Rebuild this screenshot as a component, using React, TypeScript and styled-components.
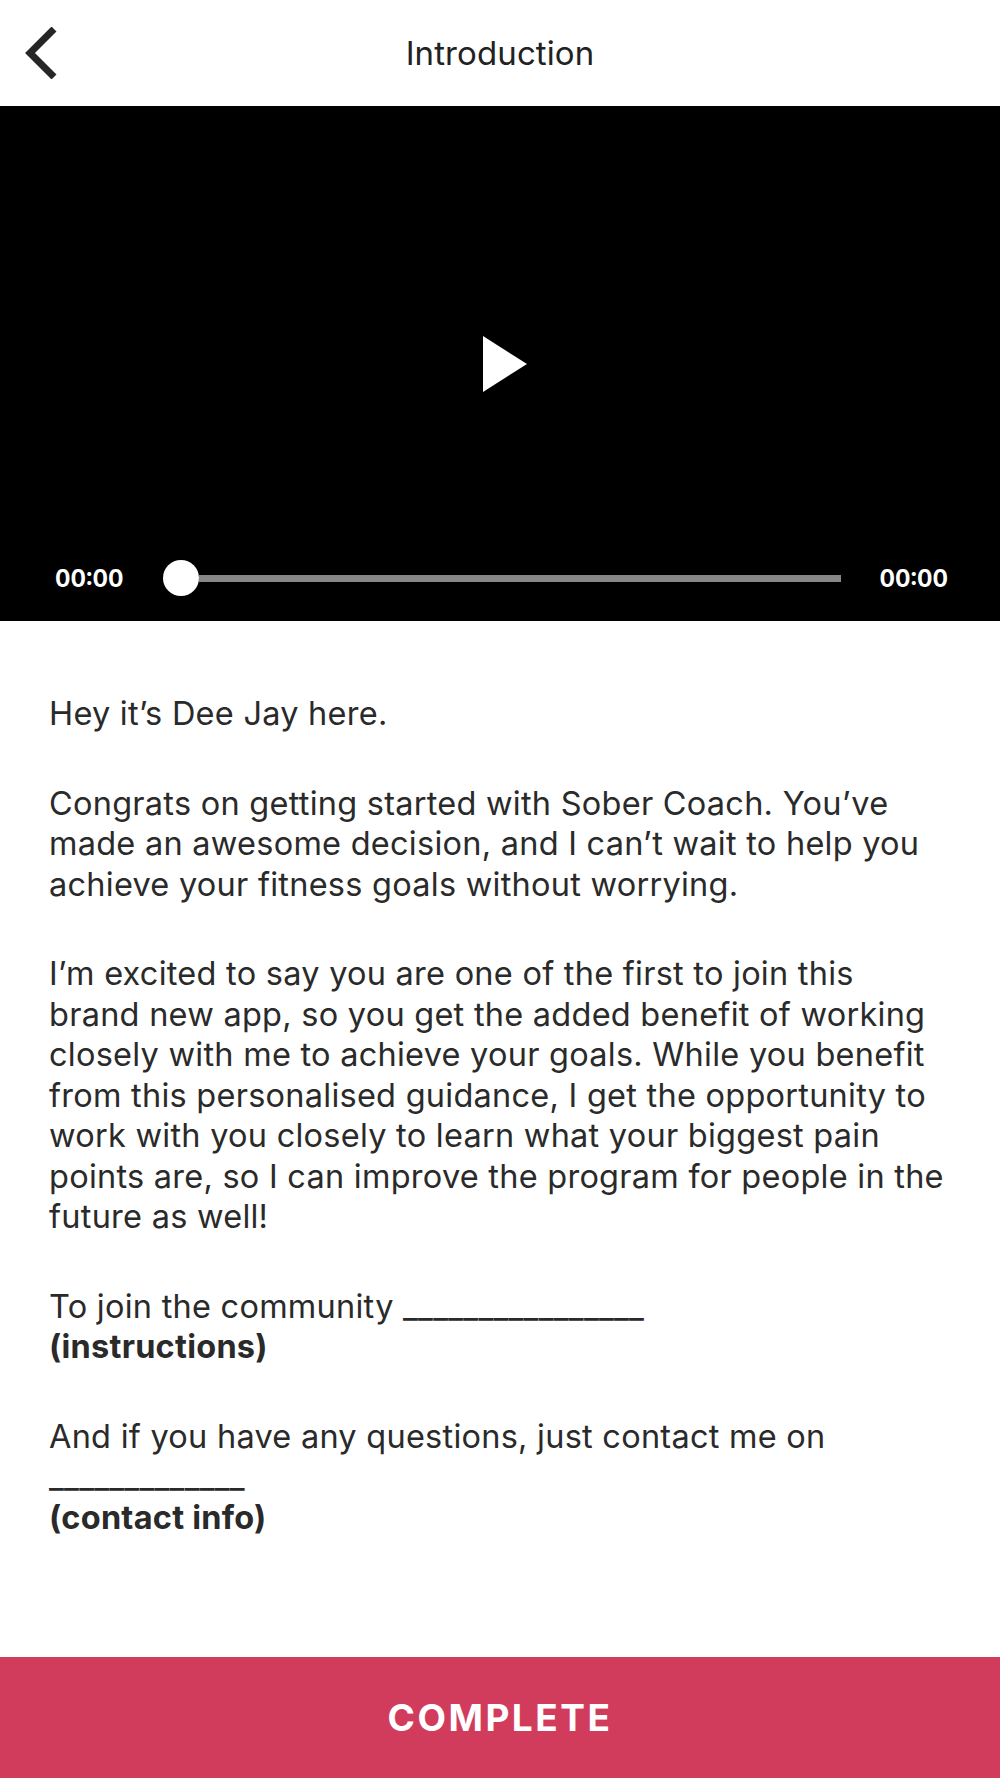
import React from "react";
import styled, { createGlobalStyle } from "styled-components";

const GlobalStyle = createGlobalStyle`
  html, body {
    margin: 0;
    padding: 0;
    background: #ffffff;
  }
  body {
    font-family: Inter, "Noto Sans", "Liberation Sans", sans-serif;
    -webkit-font-smoothing: antialiased;
  }
  * { box-sizing: border-box; }
`;

const Page = styled.div`
  min-height: 100vh;
  display: flex;
  flex-direction: column;
  background: #ffffff;
`;

const Header = styled.header`
  height: 106px;
  display: grid;
  grid-template-columns: 1fr auto 1fr;
  align-items: center;
  background: #ffffff;
`;

const BackButton = styled.button`
  justify-self: start;
  display: flex;
  align-items: center;
  margin-left: 24px;
  padding: 0;
  border: none;
  background: transparent;
  cursor: pointer;
`;

const Title = styled.h1`
  margin: 0;
  font-size: 33px;
  font-weight: 400;
  color: #222222;
  letter-spacing: 0.1px;
`;

const Video = styled.section`
  height: 515px;
  background: #000000;
  display: grid;
`;

const PlayButton = styled.button`
  grid-area: 1 / 1;
  align-self: center;
  justify-self: center;
  margin-left: 10px;
  padding: 0;
  border: none;
  background: transparent;
  display: flex;
  cursor: pointer;
`;

const Controls = styled.div`
  grid-area: 1 / 1;
  align-self: end;
  height: 86px;
  display: flex;
  align-items: center;
  padding: 0 52px 0 55px;
`;

const Time = styled.span`
  font-size: 24px;
  font-weight: 700;
  color: #ffffff;
  font-variant-numeric: tabular-nums;
`;

const Slider = styled.div`
  flex: 1;
  display: flex;
  align-items: center;
  margin: 0 38px 0 39px;
`;

const Thumb = styled.div`
  width: 36px;
  height: 36px;
  border-radius: 50%;
  background: #ffffff;
  flex-shrink: 0;
`;

const Track = styled.div`
  flex: 1;
  height: 7px;
  background: #878787;
`;

const Content = styled.main`
  flex: 1;
  padding: 73px 52px 40px 49px;
`;

const Paragraph = styled.p`
  margin: 0 0 49px;
  font-size: 32.5px;
  line-height: 40.5px;
  letter-spacing: 0.25px;
  color: #2a2a2a;
  &:last-child { margin-bottom: 0; }
`;

const Strong = styled.strong`
  font-weight: 700;
`;

const CompleteButton = styled.button`
  height: 121px;
  width: 100%;
  border: none;
  background: #d23c5c;
  color: #ffffff;
  font-family: Inter, "Noto Sans", "Liberation Sans", sans-serif;
  font-size: 37px;
  font-weight: 700;
  letter-spacing: 2.5px;
  cursor: pointer;
`;

const ChevronLeft = () => (
  <svg width="34" height="52" viewBox="0 0 34 52" aria-hidden="true">
    <polyline
      points="30,2 6,26 30,50"
      fill="none"
      stroke="#262626"
      strokeWidth="7"
      strokeLinejoin="miter"
    />
  </svg>
);

const PlayIcon = () => (
  <svg width="44" height="56" viewBox="0 0 44 56" aria-hidden="true">
    <polygon points="0,0 44,28 0,56" fill="#ffffff" />
  </svg>
);

export default function App() {
  return (
    <>
      <GlobalStyle />
      <Page>
        <Header>
          <BackButton aria-label="Back">
            <ChevronLeft />
          </BackButton>
          <Title>Introduction</Title>
          <div />
        </Header>

        <Video>
          <PlayButton aria-label="Play">
            <PlayIcon />
          </PlayButton>
          <Controls>
            <Time>00:00</Time>
            <Slider>
              <Thumb />
              <Track />
            </Slider>
            <Time>00:00</Time>
          </Controls>
        </Video>

        <Content>
          <Paragraph>Hey it’s Dee Jay here.</Paragraph>
          <Paragraph>
            Congrats on getting started with Sober Coach. You’ve made an awesome
            decision, and I can’t wait to help you achieve your fitness goals
            without worrying.
          </Paragraph>
          <Paragraph>
            I’m excited to say you are one of the first to join this brand new
            app, so you get the added benefit of working closely with me to
            achieve your goals. While you benefit from this personalised
            guidance, I get the opportunity to work with you closely to learn
            what your biggest pain points are, so I can improve the program for
            people in the future as well!
          </Paragraph>
          <Paragraph>
            To join the community ________________
            <br />
            <Strong>(instructions)</Strong>
          </Paragraph>
          <Paragraph>
            And if you have any questions, just contact me on
            <br />
            _____________
            <br />
            <Strong>(contact info)</Strong>
          </Paragraph>
        </Content>

        <CompleteButton>COMPLETE</CompleteButton>
      </Page>
    </>
  );
}
